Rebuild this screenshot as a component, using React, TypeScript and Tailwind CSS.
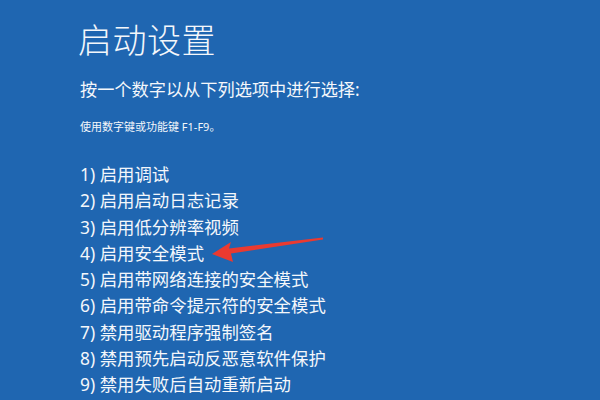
import React from "react";

const items = [
  "1) 启用调试",
  "2) 启用启动日志记录",
  "3) 启用低分辨率视频",
  "4) 启用安全模式",
  "5) 启用带网络连接的安全模式",
  "6) 启用带命令提示符的安全模式",
  "7) 禁用驱动程序强制签名",
  "8) 禁用预先启动反恶意软件保护",
  "9) 禁用失败后自动重新启动",
];

export default function App() {
  return (
    <div
      className="relative w-[600px] h-[400px] overflow-hidden bg-[#1f66b1] text-[#f4f7fb]"
      style={{ fontFamily: '"Noto Sans", "Noto Sans CJK SC", sans-serif' }}
    >
      <div className="flex flex-col pl-[78px] pt-[20px]">
        <h1 className="text-[34px] leading-[40px] font-light tracking-[0.5px]">启动设置</h1>
        <p className="mt-[18px] pl-[2px] text-[17.2px] leading-[24px]">按一个数字以从下列选项中进行选择:</p>
        <p className="mt-[17px] pl-[2px] text-[11px] leading-[16px]">使用数字键或功能键 F1-F9。</p>
        <ul className="mt-[26px] pl-[2px] flex flex-col">
          {items.map((t) => (
            <li key={t} className="text-[17.4px] leading-[26.3px] whitespace-nowrap">
              {t}
            </li>
          ))}
        </ul>
      </div>
      <svg className="absolute left-0 top-0" width="600" height="400" viewBox="0 0 600 400">
        <polygon
          points="212,254 231,242 229,248.5 323,237.5 323,239.5 231,253.5 233,262"
          fill="#ea3a30"
        />
      </svg>
    </div>
  );
}
